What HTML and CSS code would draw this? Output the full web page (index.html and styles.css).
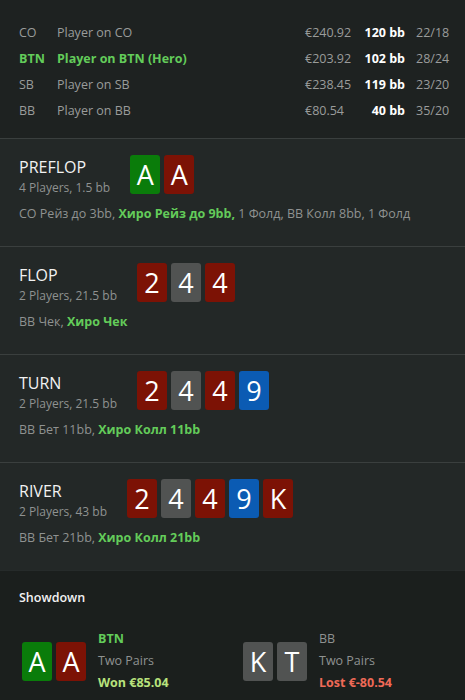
FILE: index.html
```html
<!DOCTYPE html>
<html>
<head>
<meta charset="utf-8">
<link rel="stylesheet" href="styles.css">
</head>
<body>
<div class="app">
  <div class="players">
    <div class="prow">
      <span class="pos">CO</span><span class="name">Player on CO</span><span class="money">€240.92</span><span class="bb">120 bb</span><span class="ratio">22/18</span>
    </div>
    <div class="prow hero">
      <span class="pos">BTN</span><span class="name">Player on BTN (Hero)</span><span class="money">€203.92</span><span class="bb">102 bb</span><span class="ratio">28/24</span>
    </div>
    <div class="prow">
      <span class="pos">SB</span><span class="name">Player on SB</span><span class="money">€238.45</span><span class="bb">119 bb</span><span class="ratio">23/20</span>
    </div>
    <div class="prow">
      <span class="pos">BB</span><span class="name">Player on BB</span><span class="money">€80.54</span><span class="bb">40 bb</span><span class="ratio">35/20</span>
    </div>
  </div>

  <div class="street">
    <div class="street-head">
      <div class="street-title">
        <div class="title">PREFLOP</div>
        <div class="sub">4 Players, 1.5 bb</div>
      </div>
      <div class="cards">
        <span class="card green">A</span><span class="card red">A</span>
      </div>
    </div>
    <div class="actions">CO Рейз до 3bb, <b class="hl">Хиро Рейз до 9bb,</b> 1 Фолд, BB Колл 8bb, 1 Фолд</div>
  </div>

  <div class="street">
    <div class="street-head">
      <div class="street-title">
        <div class="title">FLOP</div>
        <div class="sub">2 Players, 21.5 bb</div>
      </div>
      <div class="cards">
        <span class="card red">2</span><span class="card gray">4</span><span class="card red">4</span>
      </div>
    </div>
    <div class="actions">BB Чек, <b class="hl">Хиро Чек</b></div>
  </div>

  <div class="street">
    <div class="street-head">
      <div class="street-title">
        <div class="title">TURN</div>
        <div class="sub">2 Players, 21.5 bb</div>
      </div>
      <div class="cards">
        <span class="card red">2</span><span class="card gray">4</span><span class="card red">4</span><span class="card blue">9</span>
      </div>
    </div>
    <div class="actions">BB Бет 11bb, <b class="hl">Хиро Колл 11bb</b></div>
  </div>

  <div class="street">
    <div class="street-head">
      <div class="street-title">
        <div class="title">RIVER</div>
        <div class="sub">2 Players, 43 bb</div>
      </div>
      <div class="cards">
        <span class="card red">2</span><span class="card gray">4</span><span class="card red">4</span><span class="card blue">9</span><span class="card red">K</span>
      </div>
    </div>
    <div class="actions">BB Бет 21bb, <b class="hl">Хиро Колл 21bb</b></div>
  </div>

  <div class="showdown">
    <div class="sd-title">Showdown</div>
    <div class="sd-grid">
      <div class="sd-player">
        <div class="cards"><span class="card green">A</span><span class="card red">A</span></div>
        <div class="sd-info">
          <div class="sd-pos hero-pos">BTN</div>
          <div class="sd-hand">Two Pairs</div>
          <div class="sd-res won">Won €85.04</div>
        </div>
      </div>
      <div class="sd-player">
        <div class="cards"><span class="card gray">K</span><span class="card gray">T</span></div>
        <div class="sd-info">
          <div class="sd-pos">BB</div>
          <div class="sd-hand">Two Pairs</div>
          <div class="sd-res lost">Lost €-80.54</div>
        </div>
      </div>
    </div>
  </div>
</div>
</body>
</html>
```

FILE: styles.css
```css
* { box-sizing: border-box; }
html, body { margin: 0; padding: 0; background: #1e2221; }
body {
  font-family: "Open Sans", "Noto Sans", sans-serif;
  font-size: 12.5px;
  color: #9a9c9b;
  width: 465px;
  height: 700px;
  overflow: hidden;
}
.app { display: flex; flex-direction: column; }

.players {
  padding: 20px 16px 14px 19px;
  background: #1e2221;
  display: flex;
  flex-direction: column;
}
.prow {
  display: grid;
  grid-template-columns: 38px 1fr 50px 50px 44px;
  height: 26px;
  align-items: center;
  line-height: 26px;
}
.prow .bb { text-align: right; color: #ffffff; font-weight: 700; }
.prow .ratio { padding-left: 11px; }
.prow.hero .pos, .prow.hero .name { color: #63cc5a; font-weight: 700; }

.street {
  background: #232827;
  border-top: 1px solid #3a3f3e;
  padding: 16px 16px 23px 19px;
  display: flex;
  flex-direction: column;
  gap: 8px;
}
.street-head { display: flex; align-items: flex-start; gap: 20px; }
.street-title { padding-top: 2px; }
.title { font-size: 16px; line-height: 20px; color: #f2f2f2; }
.sub { font-size: 12px; line-height: 18px; margin-top: 2px; color: #8f9291; }
.actions { line-height: 18px; color: #8f9291; }
.hl { color: #63cc5a; font-weight: 700; }

.cards { display: flex; gap: 4px; }
.card {
  width: 30px;
  height: 39px;
  border-radius: 3px;
  color: #ffffff;
  font-size: 27px;
  line-height: 39px;
  text-align: center;
  font-family: "Open Sans", "Noto Sans", sans-serif;
}
.card.green { background: #0a7c0a; }
.card.red { background: #7c1205; }
.card.gray { background: #515352; }
.card.blue { background: #0b5bb3; }

.showdown {
  background: #1b1f1d;
  border-top: 1px solid #262b2a;
  padding: 18px 16px 20px 19px;
  flex: 1;
}
.sd-title { color: #f2f2f2; line-height: 18px; font-weight: 600; }
.sd-grid {
  display: grid;
  grid-template-columns: 221px 1fr;
  padding-left: 3px;
  margin-top: 21px;
}
.sd-player { display: flex; align-items: center; gap: 12px; }
.sd-info { display: flex; flex-direction: column; }
.sd-info > div { line-height: 22px; }
.sd-pos { color: #8f9291; }
.hero-pos { color: #63cc5a; font-weight: 700; }
.sd-hand { color: #8f9291; }
.sd-res { font-weight: 700; }
.won { color: #b8e27c; }
.lost { color: #ef6a57; }
```
